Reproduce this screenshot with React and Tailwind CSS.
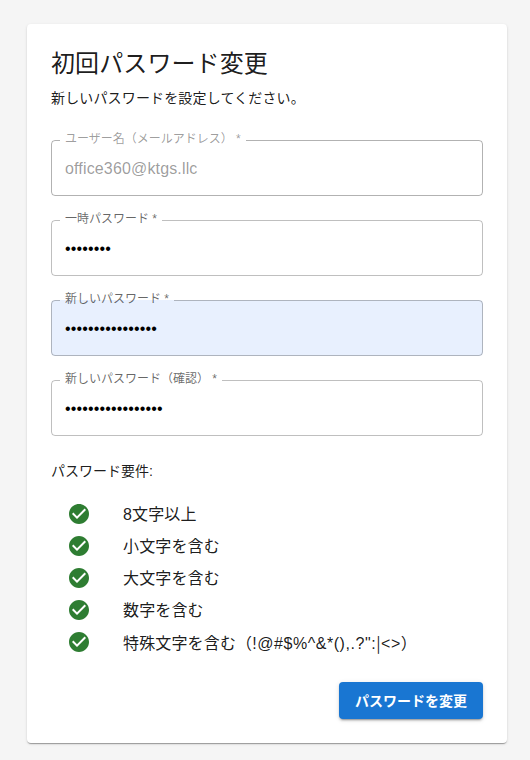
const FONT = "font-['Liberation_Sans','Noto_Sans_CJK_JP',sans-serif]";

function Field({ label, value, type = "password", disabled = false, filled = false }) {
  return (
    <div className="relative h-14 w-full">
      <input
        readOnly
        type={type}
        defaultValue={value}
        aria-label={label}
        className={`block h-14 w-full rounded px-3.5 pt-px text-base tracking-[0.15px] outline-none ${
          filled ? "bg-[#e8f0fe]" : ""
        } ${disabled ? "text-black/40" : "text-black"}`}
      />
      <label className={`absolute left-3.5 top-[-9px] text-xs leading-[17px] whitespace-nowrap ${disabled ? "text-black/40" : "text-black/60"}`}>
        {label}
      </label>
      <fieldset
        aria-hidden="true"
        className={`pointer-events-none absolute inset-0 top-[-5px] rounded border px-2 ${
          disabled ? "border-black/30" : "border-black/25"
        }`}
      >
        <legend className="invisible h-[11px] px-[5px] text-xs leading-[11px] whitespace-nowrap">{label}</legend>
      </fieldset>
    </div>
  );
}

function Check() {
  return (
    <svg viewBox="0 0 24 24" className="h-6 w-6 fill-[#2e7d32]" aria-hidden="true">
      <path d="M12 2C6.48 2 2 6.48 2 12s4.48 10 10 10 10-4.48 10-10S17.52 2 12 2zm-2 15-5-5 1.41-1.41L10 14.17l7.59-7.59L19 8l-9 9z" />
    </svg>
  );
}

const rules = [
  "8文字以上",
  "小文字を含む",
  "大文字を含む",
  "数字を含む",
  <>
    特殊文字を含む（
    <span className="tracking-[0.55px]">!@#$%^&amp;*(),.?&quot;:</span>
    <span className="font-['Noto_Sans_CJK_JP',sans-serif] tracking-[0.55px]">|</span>
    <span className="tracking-[0.55px]">&lt;&gt;</span>）
  </>,
];

export default function App() {
  return (
    <div className={`${FONT} min-h-[760px] bg-[#f5f5f5] px-[27px] pt-6 text-black/90`}>
      <div className="flex h-[719px] w-[480px] flex-col rounded bg-white p-6 shadow-[0_2px_1px_-1px_rgba(0,0,0,0.2),0_1px_1px_0_rgba(0,0,0,0.14),0_1px_3px_0_rgba(0,0,0,0.12)]">
        <h1 className="text-2xl leading-8 font-normal tracking-[0.1px]">初回パスワード変更</h1>
        <p className="mt-2 text-sm leading-5 tracking-[0.15px]">新しいパスワードを設定してください。</p>
        <div className="mt-8 flex flex-col gap-6">
          <Field label="ユーザー名（メールアドレス） *" value="office360@ktgs.llc" type="text" disabled />
          <Field label="一時パスワード *" value="abcdefgh" />
          <Field label="新しいパスワード *" value="abcdefghijklmnop" filled />
          <Field label="新しいパスワード（確認） *" value="abcdefghijklmnopq" />
        </div>
        <p className="mt-[25px] text-sm leading-5">パスワード要件:</p>
        <ul className="mt-[18px] flex flex-col">
          {rules.map((r, i) => (
            <li key={i} className="flex h-8 items-center pl-4">
              <span className="flex w-14 shrink-0 pb-0.5"><Check /></span>
              <span className="text-base leading-6 tracking-[0.15px] whitespace-nowrap">{r}</span>
            </li>
          ))}
        </ul>
        <div className="mt-[23px] flex justify-end">
          <button className="h-[37px] w-36 rounded bg-[#1976d2] text-sm font-bold text-white shadow-[0_3px_1px_-2px_rgba(0,0,0,0.2),0_2px_2px_0_rgba(0,0,0,0.14),0_1px_5px_0_rgba(0,0,0,0.12)]">
            パスワードを変更
          </button>
        </div>
      </div>
    </div>
  );
}
